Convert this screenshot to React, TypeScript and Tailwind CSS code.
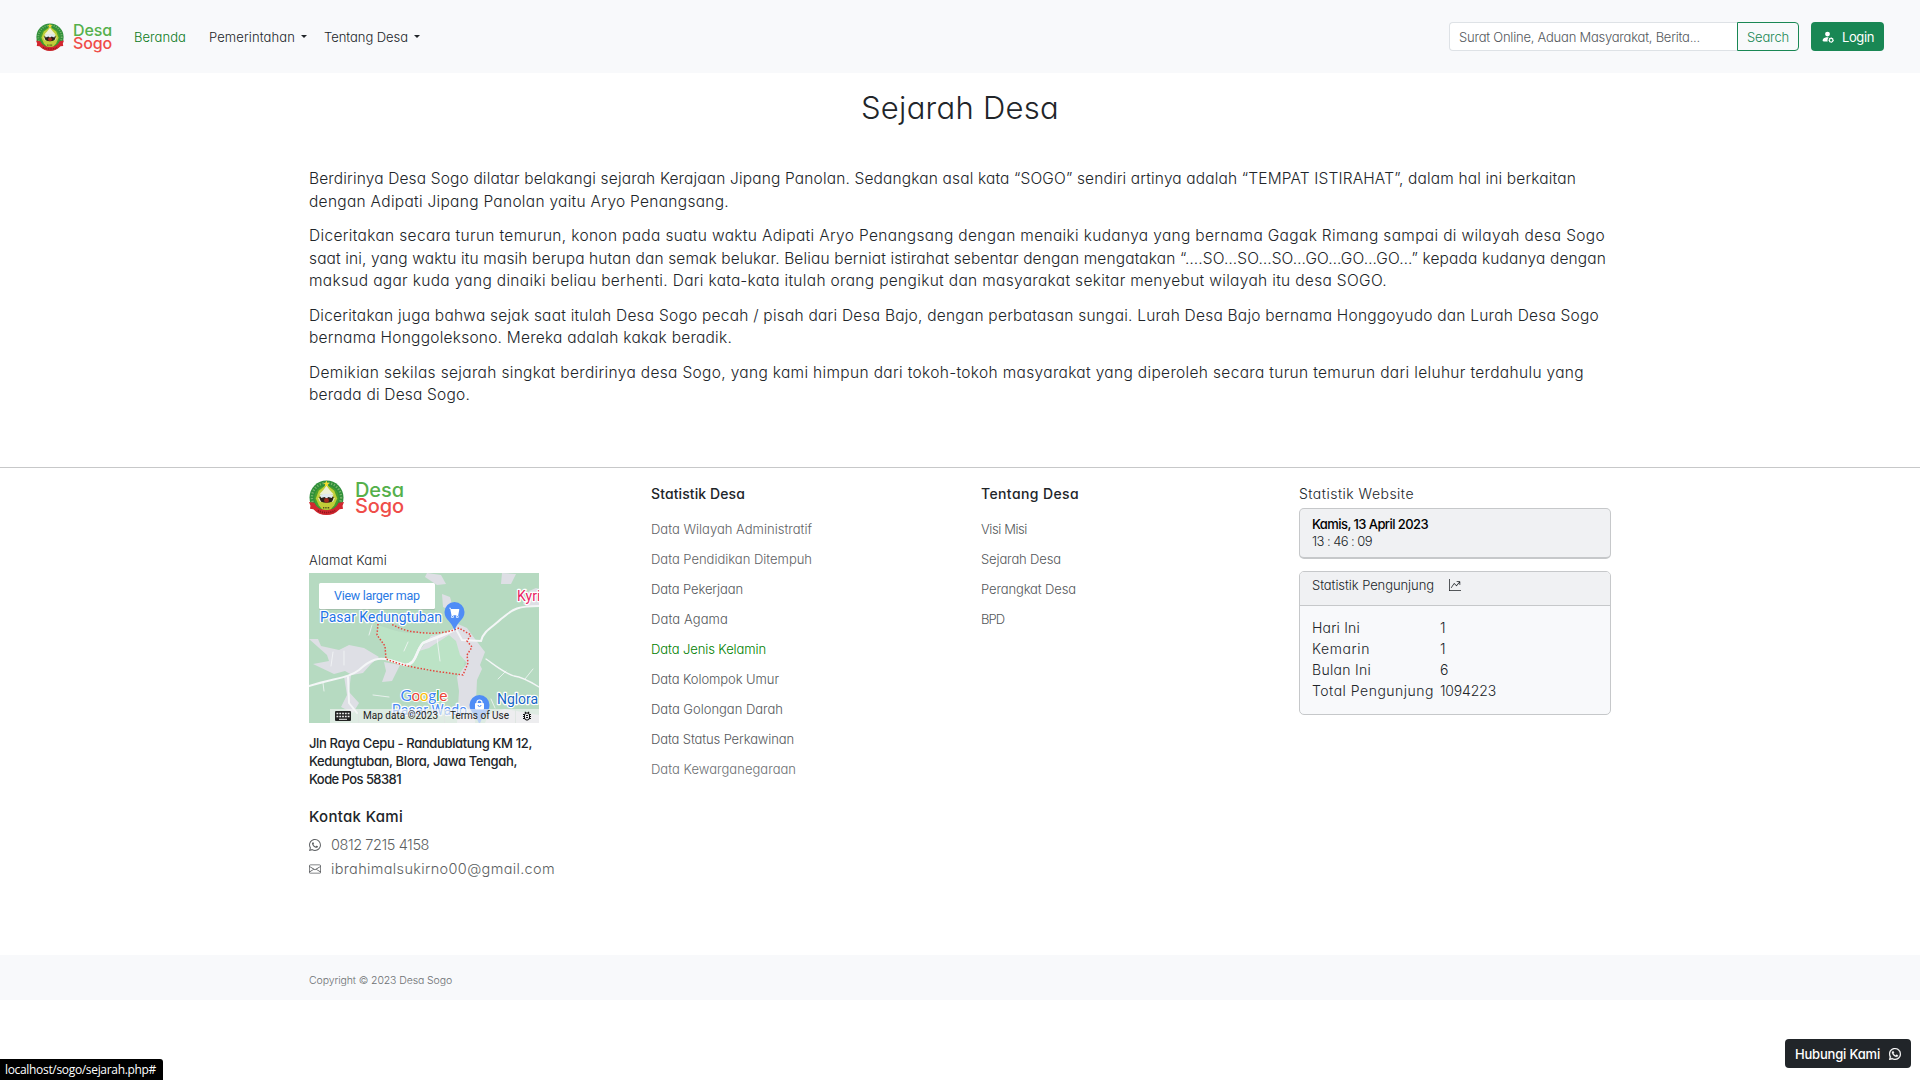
import React, { useLayoutEffect, useRef, useState } from "react";
import { BsWhatsapp, BsEnvelope, BsGraphUpArrow, BsPersonFillGear, BsCartFill } from "react-icons/bs";
import { MdOutlineBugReport } from "react-icons/md";

/** One line of text whose letter spacing is adjusted to fill a given measure. */
function Fit({ w, children, className = "" }: { w: number; children: string; className?: string }) {
  const ref = useRef<HTMLSpanElement>(null);
  const [spacing, setSpacing] = useState(0);
  useLayoutEffect(() => {
    const el = ref.current;
    if (!el) return;
    const natural = el.getBoundingClientRect().width - spacing * children.length;
    setSpacing((w - natural) / children.length);
  }, [w, children]);
  return (
    <span ref={ref} className={`inline-block whitespace-pre ${className}`} style={{ letterSpacing: `${spacing}px` }}>
      {children}
    </span>
  );
}

function Emblem({ className }: { className: string }) {
  return (
    <svg viewBox="0 0 36 36" className={className}>
      <circle cx="18" cy="18" r="17.5" fill="#2f8f3a" />
      <circle cx="18" cy="18" r="15" fill="none" stroke="#a5cf86" strokeWidth="2.4" strokeDasharray="1.3 1.7" opacity=".6" />
      <circle cx="18" cy="18.500" r="12.600" fill="#4a9f2c" />
      <path d="M18 5 L26 11 L29 19 L26 26 L22 30.500 H14 L10 26 L7 19 L10 11 Z" fill="#c0cf38" />
      <path d="M18 6 L21.500 10.500 L25.500 15 H10.500 L14.500 10.500 Z" fill="#eef0d6" />
      <path d="M18 0.500 l.9 2.300 2.300 .2 -1.800 1.500 .6 2.400 -2 -1.300 -2 1.300 .6 -2.400 -1.800 -1.500 2.300 -.2Z" fill="#f4dc2e" />
      <path d="M10.500 17.500 Q18 14.500 25.500 17.500 L24 22 Q18 25 12 22 Z" fill="#2b2119" />
      <path d="M11 15.500 Q18 13 25 15.500 L23.500 18.500 20 17.500 18 19 16 17.500 12.500 18.500Z" fill="#dfe9ee" />
      <path d="M9.800 18.500 l2 4 M26.200 18.500 l-2 4" stroke="#e8e6d8" strokeWidth="1" />
      <circle cx="18" cy="21" r="2.500" fill="#a12b1d" />
      <path d="M12 25 Q18 28 24 25 L22.500 30 H13.500Z" fill="#c3cc38" />
      <path d="M14.500 28.500 H21.500" stroke="#44521a" strokeWidth="1.400" strokeDasharray="1 .7" />
      <path d="M0 22.500 L5.500 23.500 Q9 31 18 31 Q27 31 30.500 23.500 L36 22.500 L34.500 26.500 L35 29.500 L31.500 30 Q26 36 18 36 Q10 36 4.500 30 L1 29.500 L1.500 26.500Z" fill="#d2262f" />
      <path d="M9 31.500 Q18 35.500 27 31.500" fill="none" stroke="#8e161d" strokeWidth="1.800" strokeDasharray="1.2 1" />
    </svg>
  );
}

function Caret() {
  return <span className="h-0 w-0 border-x-[3.5px] border-t-[3.5px] border-x-transparent border-t-[#212529]" />;
}

function VillageMap() {
  return (
    <svg viewBox="0 0 230 150" className="block h-[150px] w-[230px] font-normal [font-feature-settings:normal]" fontFamily="Roboto, sans-serif">
      <rect width="230" height="150" fill="#b6dac1" />
      <path d="M69 52 C82 56 92 61 107 60 S133 60 145 56 L160 63 156 84 154 102 C120 97 95 95 77 86 L77 74 68 62Z" fill="#bce3c6" />
      <g fill="#dedfe5">
        <path d="M118 0 L132 2 137 11 128 12 116 4Z" />
        <path d="M193 0 L207 1 202 11 192 11Z" />
        <path d="M133 21 L141 24 145 39 134 34Z" />
        <path d="M149 51 L158 55 166 66 176 79 171 92 173 96 168 107 166 150 148 150 150 118 148 104 158 90 151 82 147 68 140 62 120 75 110 78 122 63 140 59Z" />
        <path d="M214 31 L220 18 227 15 230 16 230 34 218 33Z" />
        <path d="M0 66 L9 66 12 73 30 77 40 72 55 75 70 84 62 91 54 100 43 102 36 98 25 101 4 91 20 88 18 82Z" />
        <path d="M75 89 L91 92 83 108 73 109 77 98Z" />
        <path d="M35 103 L42 102 40 119 50 130 44 140 32 134 38 122Z" />
        <path d="M180 141 L196 136 230 142 V150 H176Z" />
      </g>
      <g fill="none" stroke="#f4f6f7" strokeLinecap="round">
        <path d="M0 113 C25 105 40 105 50 97 C62 86 70 84 80 87 L96 92 C108 91 106 79 114 70 C123 66 138 61 147 56 L153 67 172 68 C174 58 185 53 192 46 C203 38 204 33 230 33" strokeWidth="2" />
        <path d="M80 87 L96 92 C108 91 106 79 114 70 C123 66 138 61 147 56" strokeWidth="2.600" />
        <path d="M39 104 L40 130 48 140" strokeWidth="2" />
        <path d="M177 86 C187 93 195 100 205 103 C214 104 222 109 230 114" strokeWidth="1.300" />
        <path d="M22 93 L24 79 M35 92 L35 78 M63 52 L60 62 M14 110 L15 118 M99 69 L95 78 M128 65 L131 88 M197 98 L189 106 M216 106 L224 96 M186 135 L182 126 M64 122 L80 124" strokeWidth=".8" />
      </g>
      <path d="M69 51 L68 62 76 73 77 86 C95 94 125 98 154 102 L159 90 158 82 163 74 158 68 162 62 150 55 C136 61 120 61 107 59 C95 58 88 54 82 51" fill="none" stroke="#e5453d" strokeWidth="1.500" strokeDasharray="1.5 1.7" />
      <g fontSize="14" stroke="#fff" strokeWidth="2.400" paintOrder="stroke" strokeLinejoin="round">
        <text x="11" y="49" fill="#1f74e6" textLength="122">Pasar Kedungtuban</text>
        <text x="208" y="28" fill="#e91e63">Kyri</text>
        <text x="188" y="131" fill="#1565c6" textLength="41">Nglora</text>
        <text x="83" y="142" fill="#4a8af4" textLength="75">Pasar Wado</text>
      </g>
      <path d="M145.500 58 C143 48 135.500 47 135.500 39 a10 10 0 0 1 20 0 C155.500 47 148 48 145.500 58Z" fill="#4f8df6" />
      <BsCartFill x={140} y={34} size={11} color="#fff" />
      <path d="M170.500 152 C168 142 160.500 140 160.500 132 a10 10 0 0 1 20 0 C180.500 140 173 142 170.500 152Z" fill="#4f8df6" />
      <rect x="166" y="130" width="9" height="6.500" rx="1" fill="#fff" />
      <path d="M168 130.500 V129.500 a2.500 2.500 0 0 1 5 0 V130.500" fill="none" stroke="#fff" strokeWidth="1.200" />
      <path d="M169 132 a1.500 1.500 0 0 0 3 0" fill="none" stroke="#4f8df6" strokeWidth="1" />
      <g fontSize="15.500" fontFamily="Lato, sans-serif" stroke="#fff" strokeWidth="2" paintOrder="stroke">
        <text x="91.500" y="128" textLength="47"><tspan fill="#4285f4">G</tspan><tspan fill="#ea4335">o</tspan><tspan fill="#fbbc05">o</tspan><tspan fill="#4285f4">g</tspan><tspan fill="#34a853">l</tspan><tspan fill="#ea4335">e</tspan></text>
      </g>
      <rect x="21" y="136" width="209" height="14" fill="#f5f5f5" fillOpacity=".65" />
      <path d="M49.500 136V150M135.500 136V150M206.500 136V150" stroke="#dfe6e2" />
      <rect x="26" y="138" width="16" height="10" rx="1" fill="#222" />
      <path d="M27.500 140.500H40.500M27.500 143.500H40.500" stroke="#eee" strokeWidth="1.600" strokeDasharray="1.8 1" />
      <path d="M30 146.300H38" stroke="#eee" strokeWidth="1" />
      <g fontSize="10" fill="#222">
        <text x="54" y="146" textLength="75">Map data ©2023</text>
        <text x="141" y="146" textLength="59">Terms of Use</text>
      </g>
      <MdOutlineBugReport x={212} y={137} size={12} color="#111" />
      <rect x="10" y="11" width="116" height="26" rx="1.500" fill="#7d8f84" opacity=".35" />
      <rect x="10" y="10" width="116" height="26" rx="1.500" fill="#fff" />
      <text x="25" y="27" fontSize="12.500" fill="#2a7ae4" textLength="86">View larger map</text>
    </svg>
  );
}

const paragraphs: [string, number][][] = [
  [
    ["Berdirinya Desa Sogo dilatar belakangi sejarah Kerajaan Jipang Panolan. Sedangkan asal kata “SOGO” sendiri artinya adalah “TEMPAT ISTIRAHAT”, dalam hal ini berkaitan", 1267],
    ["dengan Adipati Jipang Panolan yaitu Aryo Penangsang.", 420],
  ],
  [
    ["Diceritakan secara turun temurun, konon pada suatu waktu Adipati Aryo Penangsang dengan menaiki kudanya yang bernama Gagak Rimang sampai di wilayah desa Sogo", 1296],
    ["saat ini, yang waktu itu masih berupa hutan dan semak belukar. Beliau berniat istirahat sebentar dengan mengatakan “….SO…SO…SO…GO…GO…GO…” kepada kudanya dengan", 1297],
    ["maksud agar kuda yang dinaiki beliau berhenti. Dari kata-kata itulah orang pengikut dan masyarakat sekitar menyebut wilayah itu desa SOGO.", 1078],
  ],
  [
    ["Diceritakan juga bahwa sejak saat itulah Desa Sogo pecah / pisah dari Desa Bajo, dengan perbatasan sungai. Lurah Desa Bajo bernama Honggoyudo dan Lurah Desa Sogo", 1290],
    ["bernama Honggoleksono. Mereka adalah kakak beradik.", 423],
  ],
  [
    ["Demikian sekilas sejarah singkat berdirinya desa Sogo, yang kami himpun dari tokoh-tokoh masyarakat yang diperoleh secara turun temurun dari leluhur terdahulu yang", 1275],
    ["berada di Desa Sogo.", 161],
  ],
];

const stats: [string, number, string][] = [
  ["Data Wilayah Administratif", 161, "text-[#5f6265]"],
  ["Data Pendidikan Ditempuh", 161, "text-[#5f6265]"],
  ["Data Pekerjaan", 92, "text-[#55585b]"],
  ["Data Agama", 77, "text-[#55585b]"],
  ["Data Jenis Kelamin", 115, "text-[#008000]"],
  ["Data Kolompok Umur", 128, "text-[#55585b]"],
  ["Data Golongan Darah", 132, "text-[#55585b]"],
  ["Data Status Perkawinan", 143, "text-[#55585b]"],
  ["Data Kewarganegaraan", 145, "text-[#6c6f72]"],
];

const about: [string, number][] = [
  ["Visi Misi", 46],
  ["Sejarah Desa", 80],
  ["Perangkat Desa", 95],
  ["BPD", 23],
];

const visitors: [string, number, string, number][] = [
  ["Hari Ini", 48, "1", 5],
  ["Kemarin", 58, "1", 5],
  ["Bulan Ini", 59, "6", 9],
  ["Total Pengunjung", 122, "1094223", 56],
];

export default function App() {
  return (
    <div className="flex h-[1080px] w-[1920px] flex-col overflow-hidden bg-white font-[Inter,sans-serif] font-[350] text-[#212529] [font-feature-settings:'cv11']">
      <header className="flex h-[73px] shrink-0 items-center bg-[#f8f9fb] pr-9 pl-9 text-[13px] leading-[20px]">
        <Emblem className="h-7 w-7" />
        <div className="ml-[9px] w-[61px] text-[16px] leading-[13px] font-medium">
          <div className="h-[13px] text-[#55b04b]"><Fit w={39}>Desa</Fit></div>
          <div className="h-[13px] text-[#ef4d49]"><Fit w={39}>Sogo</Fit></div>
        </div>
        <Fit w={52} className="text-[#0a7a1a]">Beranda</Fit>
        <div className="ml-[23px] flex items-center gap-[6px]"><Fit w={86}>Pemerintahan</Fit><Caret /></div>
        <div className="ml-[17px] flex items-center gap-[6px]"><Fit w={84}>Tentang Desa</Fit><Caret /></div>
        <div className="ml-auto flex h-[29px]">
          <div className="flex w-[288px] items-center rounded-l-[4px] border border-r-0 border-[#dee2e6] bg-white pl-[9px] text-[#55595d]">
            <Fit w={241}>Surat Online, Aduan Masyarakat, Berita...</Fit>
          </div>
          <button className="flex w-[62px] items-center justify-center rounded-r-[4px] border border-[#198754] text-[#198754]"><Fit w={42}>Search</Fit></button>
          <button className="ml-3 flex w-[73px] items-center rounded-[4px] bg-[#198754] pl-[10px] font-normal text-white">
            <BsPersonFillGear className="mr-2 h-[13px] w-[13px]" />
            <Fit w={32}>Login</Fit>
          </button>
        </div>
      </header>

      <main className="h-[394px] shrink-0 pt-4">
        <h1 className="text-center text-[31px] leading-[38px]"><Fit w={198}>Sejarah Desa</Fit></h1>
        <div className="mt-[41px] ml-[309px] flex flex-col gap-3 text-[15.5px] leading-[22.5px]">
          {paragraphs.map((lines, i) => (
            <p key={i}>
              {lines.map(([text, w]) => <span key={text} className="block h-[22.5px]"><Fit w={w}>{text}</Fit></span>)}
            </p>
          ))}
        </div>
      </main>

      <footer className="flex shrink-0 flex-col">
        <div className="grid h-[488px] grid-cols-[342px_330px_318px_312px] border-t border-[#c7c8c9] pl-[309px]">
          <section className="pt-3">
            <div className="flex h-[35px] items-center">
              <Emblem className="h-[35px] w-[35px]" />
              <div className="ml-[11px] text-[20px] leading-[16px] font-medium">
                <div className="h-[16px] text-[#55b04b]"><Fit w={49}>Desa</Fit></div>
                <div className="h-[16px] text-[#ef4d49]"><Fit w={49}>Sogo</Fit></div>
              </div>
            </div>
            <div className="mt-[35px] h-[23px] text-[13px] leading-[20px]"><Fit w={78}>Alamat Kami</Fit></div>
            <VillageMap />
            <address className="mt-[11px] flex flex-col items-start text-[13px] leading-[18px] font-medium not-italic">
              <Fit w={223}>Jln Raya Cepu - Randublatung KM 12,</Fit>
              <Fit w={208}>Kedungtuban, Blora, Jawa Tengah,</Fit>
              <Fit w={92}>Kode Pos 58381</Fit>
            </address>
            <h2 className="mt-[18px] h-[27px] text-[15px] leading-[22px] font-medium"><Fit w={94}>Kontak Kami</Fit></h2>
            <div className="flex h-6 items-center gap-[10px] text-[14.5px] leading-6 text-[#5c5f62]"><BsWhatsapp className="h-3 w-3" /><Fit w={98}>0812 7215 4158</Fit></div>
            <div className="flex h-6 items-center gap-[10px] text-[14.5px] leading-6 text-[#5c5f62]"><BsEnvelope className="h-3 w-3" /><Fit w={224}>ibrahimalsukirno00@gmail.com</Fit></div>
          </section>

          <section className="pt-[15px]">
            <h2 className="h-[31px] text-[14px] leading-[21px] font-medium"><Fit w={94}>Statistik Desa</Fit></h2>
            <ul className="text-[13px] leading-[30px]">
              {stats.map(([label, w, color]) => <li key={label} className="h-[30px]"><Fit w={w} className={color}>{label}</Fit></li>)}
            </ul>
          </section>

          <section className="pt-[15px]">
            <h2 className="h-[31px] text-[14px] leading-[21px] font-medium"><Fit w={98}>Tentang Desa</Fit></h2>
            <ul className="text-[13px] leading-[30px] text-[#55585b]">
              {about.map(([label, w]) => <li key={label} className="h-[30px]"><Fit w={w}>{label}</Fit></li>)}
            </ul>
          </section>

          <section className="pt-[15px]">
            <h2 className="h-[25px] text-[14px] leading-[21px]"><Fit w={115}>Statistik Website</Fit></h2>
            <div className="flex h-[51px] flex-col items-start rounded-[5px] border border-b-2 border-[#c6c8ca] bg-[#f0f1f3] pt-[6px] pl-3 text-[13px] leading-[18px]">
              <Fit w={116} className="h-[17px] font-medium text-black">Kamis, 13 April 2023</Fit>
              <Fit w={60}>13 : 46 : 09</Fit>
            </div>
            <div className="mt-3 h-[144px] rounded-[5px] border border-[#c6c8ca] bg-[#f8f9fb]">
              <div className="flex h-[34px] items-start rounded-t-[4px] border-b border-[#c6c8ca] bg-[#f0f1f3] pt-1 pl-3 text-[13px] leading-[18px]">
                <Fit w={122}>Statistik Pengunjung</Fit>
                <BsGraphUpArrow className="mt-[3px] ml-[15px] h-3 w-3" />
              </div>
              <div className="grid grid-cols-[128px_1fr] pt-[11px] pl-3 text-[14px] leading-[21px]">
                {visitors.map(([label, w, value, vw]) => (
                  <React.Fragment key={label}>
                    <div className="h-[21px]"><Fit w={w}>{label}</Fit></div>
                    <div className="h-[21px]"><Fit w={vw}>{value}</Fit></div>
                  </React.Fragment>
                ))}
              </div>
            </div>
          </section>
        </div>
        <div className="flex h-[45px] items-center bg-[#f8f9fb] pt-[7px] pl-[309px] text-[10.5px] leading-4 text-[#6d7073]"><Fit w={143}>Copyright © 2023 Desa Sogo</Fit></div>
      </footer>

      <div className="fixed bottom-0 left-0 flex h-[21px] w-[163px] items-center rounded-tr-[3px] bg-black pl-[5px] font-['Open_Sans',sans-serif] text-[12px] leading-[18px] font-normal text-white"><Fit w={151}>localhost/sogo/sejarah.php#</Fit></div>
      <button className="fixed right-[9px] bottom-3 flex h-[29px] w-[126px] items-center rounded-[4px] bg-[#212529] pl-[10px] text-[13px] leading-[20px] font-medium text-white">
        <Fit w={85}>Hubungi Kami</Fit>
        <BsWhatsapp className="ml-[9px] h-3 w-3 stroke-current stroke-[.4]" />
      </button>
    </div>
  );
}
